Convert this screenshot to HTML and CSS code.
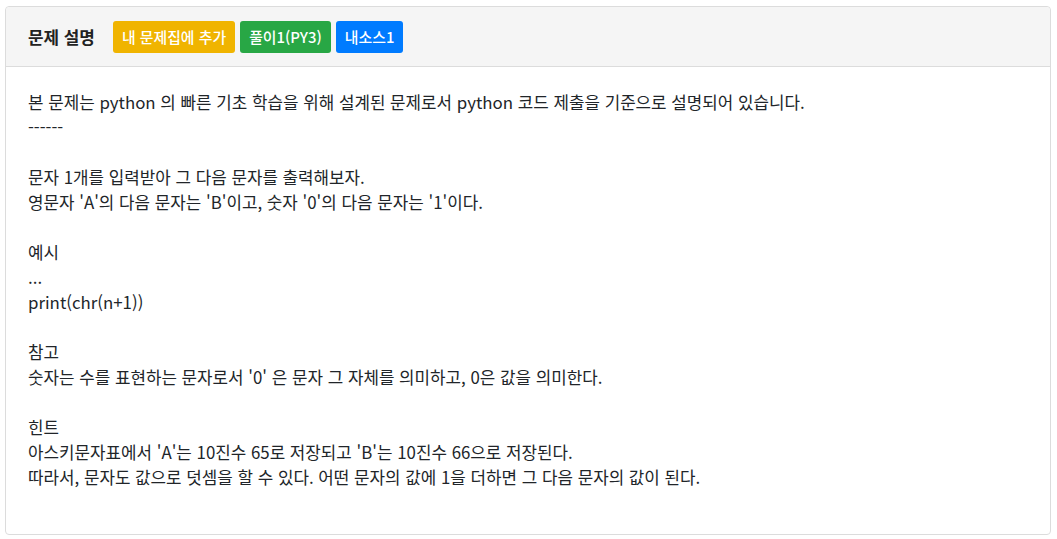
FILE: index.html
```html
<!DOCTYPE html>
<html lang="ko">
  <head>
    <meta charset="utf-8">
    <title>문제 설명</title>
    <link rel="stylesheet" href="styles.css">
  </head>
  <body>
    <div class="card">
      <div class="card-header">
        <span class="title">문제 설명</span>
        <a class="btn btn-yellow">내 문제집에 추가</a>
        <a class="btn btn-green">풀이1(PY3)</a>
        <a class="btn btn-blue">내소스1</a>
      </div>
      <div class="card-body">
        <p>본 문제는 python 의 빠른 기초 학습을 위해 설계된 문제로서 python 코드 제출을 기준으로 설명되어 있습니다.<br>------</p>
        <p>문자 1개를 입력받아 그 다음 문자를 출력해보자.<br>영문자 'A'의 다음 문자는 'B'이고, 숫자 '0'의 다음 문자는 '1'이다.</p>
        <p>예시<br>...<br>print(chr(n+1))</p>
        <p>참고<br>숫자는 수를 표현하는 문자로서 '0' 은 문자 그 자체를 의미하고, 0은 값을 의미한다.</p>
        <p>힌트<br>아스키문자표에서 'A'는 10진수 65로 저장되고 'B'는 10진수 66으로 저장된다.<br>따라서, 문자도 값으로 덧셈을 할 수 있다. 어떤 문자의 값에 1을 더하면 그 다음 문자의 값이 된다.</p>
      </div>
    </div>
  </body>
</html>
```

FILE: styles.css
```css
/* page */
body {
  margin: 6px 6px 0 5px;
  font-family: "Noto Sans CJK KR", "Noto Sans", sans-serif;
  color: #212529;
  background: #fff;
}
.card {
  border: 1px solid #dcdcdc;
  border-radius: 4px;
  height: 529px;
  box-sizing: border-box;
}
.card-header {
  display: flex;
  align-items: center;
  gap: 5px;
  height: 60px;
  box-sizing: border-box;
  padding: 0 22px;
  background: #f5f5f5;
  border-bottom: 1px solid #dcdcdc;
  border-radius: 4px 4px 0 0;
}
.title {
  font-size: 16.9px;
  font-weight: bold;
  color: #222;
  margin-right: 13px;
}
.btn {
  display: inline-block;
  height: 32px;
  line-height: 32px;
  padding: 0 9px;
  border-radius: 3px;
  color: #fff;
  font-size: 14.9px;
  font-weight: 500;
}
.btn-yellow { background: #f0b400; }
.btn-green { background: #28a745; }
.btn-blue { background: #007bff; }
.card-body {
  padding: 22px 22px;
  font-size: 16.85px;
  line-height: 25px;
}
.card-body p {
  margin: 0 0 25px;
}
```
